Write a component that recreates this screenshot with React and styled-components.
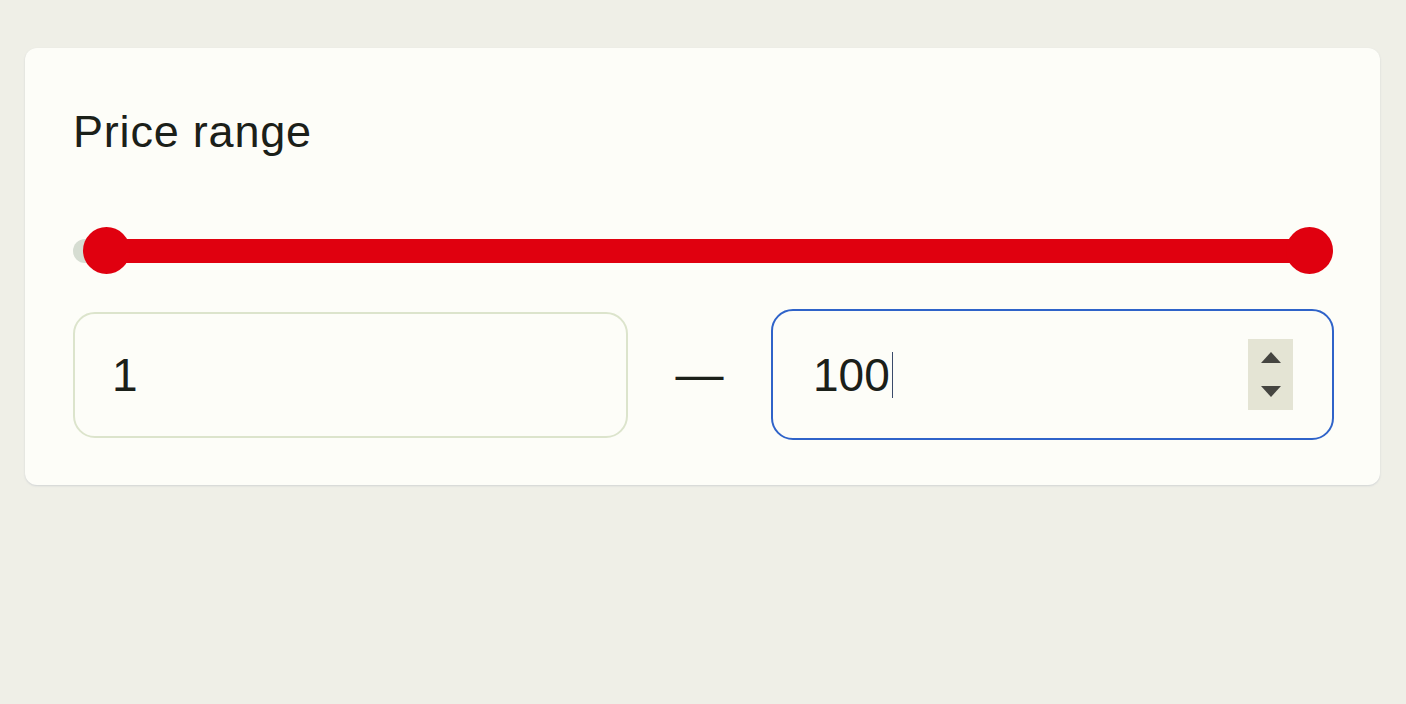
import React from "react";
import styled, { createGlobalStyle } from "styled-components";

const Global = createGlobalStyle`
  html, body { margin: 0; padding: 0; }
  body {
    background: #efefe7;
    font-family: "Liberation Sans", Arial, sans-serif;
    color: #1b2019;
    width: 1406px;
    height: 704px;
    overflow: hidden;
  }
`;

const Page = styled.div`
  padding: 48px 26px 0 25px;
`;

const Card = styled.section`
  width: 1355px;
  box-sizing: border-box;
  background: #fdfdf8;
  border-radius: 12px;
  box-shadow: 0 1px 2px rgba(120, 130, 160, 0.25);
  padding: 59px 48px 45px 48px;
  display: flex;
  flex-direction: column;
`;

const Title = styled.h2`
  margin: 0;
  font-size: 45px;
  line-height: 50px;
  font-weight: 400;
  letter-spacing: 0.8px;
  color: #1b2019;
`;

const Slider = styled.div`
  position: relative;
  margin-top: 70px;
  height: 48px;
  width: 1259px;
`;

const Track = styled.div`
  position: absolute;
  left: 0;
  right: 0;
  top: 12px;
  height: 24px;
  border-radius: 12px;
  background: #d6ddd2;
`;

const Fill = styled.div`
  position: absolute;
  top: 12px;
  height: 24px;
  background: #e0000f;
`;

const Thumb = styled.div`
  position: absolute;
  top: 0;
  width: 47px;
  height: 47px;
  margin-left: -23.5px;
  border-radius: 50%;
  background: #e0000f;
`;

const Row = styled.div`
  margin-top: 34px;
  display: flex;
  align-items: center;
  gap: 47.5px;
`;

const Field = styled.div`
  position: relative;
  flex-shrink: 0;
  box-sizing: border-box;
  width: ${(p) => (p.$focused ? "563px" : "555px")};
  height: ${(p) => (p.$focused ? "131px" : "126px")};
  margin-right: ${(p) => (p.$focused ? "-2px" : "0")};
  border: ${(p) => (p.$focused ? "2.5px solid #2f63c9" : "2px solid #dce4cc")};
  border-radius: 22px;
  background: #fdfdf8;
  display: flex;
  align-items: center;
  padding-left: ${(p) => (p.$focused ? "40px" : "37px")};
  font-size: 46px;
  color: #1b2019;
`;

const Caret = styled.span`
  display: inline-block;
  width: 1.5px;
  height: 46px;
  margin-left: 2px;
  background: #3a4a6a;
  vertical-align: middle;
`;

const Dash = styled.span`
  flex-shrink: 0;
  font-size: 48px;
  line-height: 1;
  color: #1b2019;
  width: 48px;
  text-align: center;
`;

const Spinner = styled.div`
  position: absolute;
  right: 39px;
  top: 28px;
  width: 45px;
  height: 71px;
  background: #e4e4d4;
  display: flex;
  flex-direction: column;
  align-items: center;
  justify-content: center;
  gap: 23px;
`;

const Arrow = styled.span`
  width: 0;
  height: 0;
  border-left: 10.5px solid transparent;
  border-right: 10.5px solid transparent;
  ${(p) =>
    p.$up
      ? "border-bottom: 11px solid #454540;"
      : "border-top: 11px solid #454540;"}
`;

export default function App() {
  const min = 1;
  const max = 100;
  const width = 1259;
  const leftPos = 33;
  const rightPos = width - 23;
  return (
    <>
      <Global />
      <Page>
        <Card>
          <Title>Price range</Title>
          <Slider>
            <Track />
            <Fill style={{ left: leftPos, width: rightPos - leftPos }} />
            <Thumb style={{ left: leftPos }} />
            <Thumb style={{ left: rightPos }} />
          </Slider>
          <Row>
            <Field>{min}</Field>
            <Dash>—</Dash>
            <Field $focused>
              <span>{max}</span>
              <Caret />
              <Spinner>
                <Arrow $up />
                <Arrow />
              </Spinner>
            </Field>
          </Row>
        </Card>
      </Page>
    </>
  );
}
